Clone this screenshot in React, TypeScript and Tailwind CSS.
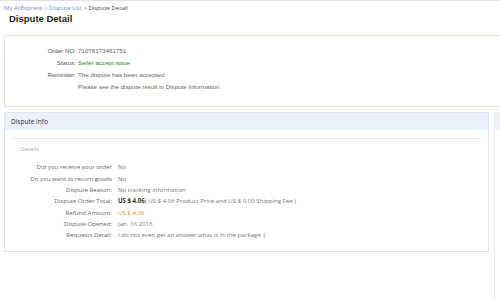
const rows: { label: string; value: React.ReactNode }[] = [
  { label: 'Did you receive your order', value: 'No' },
  { label: 'Do you want to return goods', value: 'No' },
  { label: 'Dispute Reason:', value: 'No tracking information' },
  {
    label: 'Dispute Order Total:',
    value: (
      <>
        <span className="font-bold text-[#333]">US $ 4.06</span>( US $ 4.06 Product Price and US $ 0.00 Shipping Fee )
      </>
    ),
  },
  { label: 'Refund Amount:', value: <span className="text-[#f08a1c]">US $ 4.06</span> },
  { label: 'Dispute Opened:', value: 'Jan. 16 2016' },
  { label: 'Requests Detail:', value: 'I do not even get an answer what is in the package :(' },
];

const summary = [
  { label: 'Order NO:', value: '71078173461751' },
  { label: 'Status:', value: <span className="text-[#2d8a2d]">Seller accept issue</span> },
  { label: 'Reminder:', value: 'The dispute has been accepted' },
  { label: '', value: 'Please see the dispute result in Dispute Information.' },
];

export default function App() {
  return (
    <div className="w-[500px] h-[300px] overflow-hidden bg-white border-t border-[#e2e2e2]">
      <div className="w-[560px]">
        <div className="pl-[4px] pt-[3px] text-[6px] leading-[8px] text-[#4a4a4a] font-['Open_Sans',sans-serif]">
          <span className="text-[#6a8fce]">My AliExpress</span>
          <span className="text-[#6a8fce]"> &gt; Dispute List</span> &gt; Dispute Detail
        </div>
        <h1 className="pl-[9px] pt-[1px] text-[9.5px] leading-[12px] font-bold text-[#222] font-['Liberation_Sans',Arial,sans-serif]">
          Dispute Detail
        </h1>
        <div className="ml-[4px] mt-[10px] h-[72px] border border-[#e6e6d2] bg-[#fffffd] pt-[9px] font-['Liberation_Sans',Arial,sans-serif] text-[6.2px] text-[#555]">
          {summary.map((r, i) => (
            <div key={i} className="flex h-[12px] items-center">
              <div className="w-[71px] text-right">{r.label}</div>
              <div className="pl-[2px] text-[#666]">{r.value}</div>
            </div>
          ))}
        </div>
        <div className="flex gap-[5px] pl-[4px] pt-[5px]">
          <div className="w-[485px] h-[140px] border border-[#dfe7ee] bg-white font-['Open_Sans',sans-serif]">
            <div className="h-[17px] bg-[#e9f1fc] pl-[6px] flex items-center text-[6.5px] text-[#333]">
              Dispute info
            </div>
            <div className="mx-[7px] mt-[8px] border-t border-[#eee8e6]" />
            <div className="pl-[15px] pt-[5px] text-[6px] text-[#aaa] leading-[10px]">Details</div>
            <div className="pt-[7px] text-[6.1px] text-[#666]">
              {rows.map((r, i) => (
                <div key={i} className="flex h-[11.4px] items-center">
                  <div className="w-[107px] text-right">{r.label}</div>
                  <div className="pl-[6px] text-[#777]">{r.value}</div>
                </div>
              ))}
            </div>
          </div>
          <div className="flex-1 h-[200px] border border-[#e6e9ee] bg-white">
            <div className="h-[17px] bg-[#eef3fb]" />
          </div>
        </div>
      </div>
    </div>
  );
}
